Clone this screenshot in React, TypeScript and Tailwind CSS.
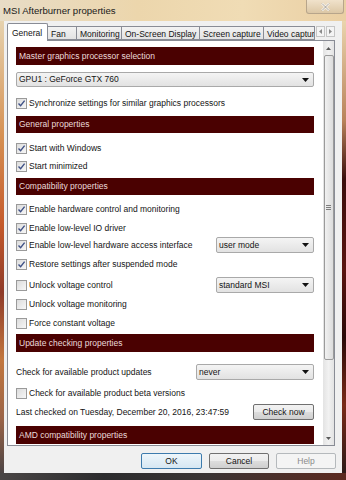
import React from "react";

const font = { fontFamily: '"Liberation Sans", Arial, sans-serif' };

function Header({ title, className = "" }: { title: string; className?: string }) {
    return (
        <div className={`h-[18px] shrink-0 bg-[#4a0101] flex items-center pl-[3px] text-[8.5px] text-[#eadada] ${className}`}>
            {title}
        </div>
    );
}

function CheckBox({ checked }: { checked: boolean }) {
    return (
        <div className="w-[11px] h-[11px] shrink-0 border border-[#9a9a9a] bg-[linear-gradient(135deg,#dcdcdc,#f7f7f7)] flex items-center justify-center">
            {checked && (
                <svg width="9" height="9" viewBox="0 0 9 9">
                    <path d="M1.5 4.6 L3.6 6.8 L7.6 1.6" fill="none" stroke="#3f5186" strokeWidth="1.4" />
                </svg>
            )}
        </div>
    );
}

function Check({ label, checked, className = "" }: { label: string; checked: boolean; className?: string }) {
    return (
        <div className={`h-[13px] shrink-0 flex items-center gap-[2px] text-[8.5px] text-[#141414] ${className}`}>
            <CheckBox checked={checked} />
            <span>{label}</span>
        </div>
    );
}

function Select({ value, className = "" }: { value: string; className?: string }) {
    return (
        <div className={`h-[16px] shrink-0 border border-[#a9a9a9] rounded-[2px] bg-[linear-gradient(to_bottom,#f4f4f4,#e2e2e2)] flex items-center justify-between pl-[2px] pr-[4px] text-[8.5px] text-[#141414] ${className}`}>
            <span>{value}</span>
            <svg width="7" height="4" viewBox="0 0 7 4">
                <path d="M0 0 H7 L3.5 4 Z" fill="#111" />
            </svg>
        </div>
    );
}

function Tab({ label, w, active }: { label: string; w: string; active?: boolean }) {
    if (active) {
        return (
            <div className={`${w} h-[18px] -mb-[1px] z-10 border border-b-0 border-[#898c95] bg-white pl-[4px] pt-[3px] text-[8.5px] text-[#141414] rounded-t-[2px]`}>
                {label}
            </div>
        );
    }
    return (
        <div className={`${w} h-[14px] border border-l-0 border-[#898c95] bg-[linear-gradient(to_bottom,#f3f3f3,#e3e3e3)] pl-[3px] pt-[1px] text-[8.5px] text-[#141414] overflow-hidden whitespace-nowrap`}>
            {label}
        </div>
    );
}

function Button({ label, w, primary, disabled }: { label: string; w: string; primary?: boolean; disabled?: boolean }) {
    const tone = disabled
        ? "border-[#b5b9bc] bg-[#f4f4f4] text-[#8a8a8a]"
        : primary
        ? "border-[#3d7bad] bg-[linear-gradient(to_bottom,#eef6fb,#d6e7f2)] text-[#141414]"
        : "border-[#707070] bg-[linear-gradient(to_bottom,#f2f2f2,#ebebeb_50%,#dddddd_51%,#cfcfcf)] text-[#141414]";
    return (
        <div className={`${w} h-[16px] border rounded-[2px] flex items-center justify-center text-[8.5px] ${tone}`}>
            {label}
        </div>
    );
}

function ScrollBar() {
    return (
        <div className="w-[11px] h-full bg-[linear-gradient(to_right,#e3e3e3,#f1f1f1,#e3e3e3)] flex flex-col items-center">
            <div className="h-[14px] w-full flex items-center justify-center">
                <svg width="5" height="3" viewBox="0 0 5 3"><path d="M0 3 L2.5 0 L5 3 Z" fill="#5a5a5a" /></svg>
            </div>
            <div className="h-[305px] w-[10px] border border-[#9b9b9b] rounded-[2px] bg-[linear-gradient(to_right,#f1f1f1,#dcdcdc)] flex items-center justify-center">
                <svg width="5" height="5" viewBox="0 0 5 5">
                    <path d="M0 0.5 H5 M0 2.5 H5 M0 4.5 H5" stroke="#7d7d7d" strokeWidth="1" />
                </svg>
            </div>
            <div className="flex-1" />
            <div className="h-[14px] w-full flex items-center justify-center">
                <svg width="5" height="3" viewBox="0 0 5 3"><path d="M0 0 L5 0 L2.5 3 Z" fill="#5a5a5a" /></svg>
            </div>
        </div>
    );
}

export default function App() {
    return (
        <div style={font} className="w-[346px] h-[480px] flex flex-col overflow-hidden bg-[#e3cfae]">
            {/* Title bar */}
            <div className="h-[21px] shrink-0 flex justify-between bg-[linear-gradient(to_right,#e8dcc6,#ecd6ac_40%,#f0dcb5_70%,#eacfa3)]">
                <span className="pl-[3px] pt-[4px] text-[9.6px] text-[#1a1a1a]">MSI Afterburner properties</span>
                <div className="w-[38px] h-[14px] mr-[2px] border border-t-0 border-[#b7a58b] rounded-b-[3px] bg-[linear-gradient(to_bottom,#f0e2cb,#dcc7a5)] flex items-center justify-center">
                    <svg width="9" height="8" viewBox="0 0 9 8">
                        <path d="M1 0.5 L8 7.5 M8 0.5 L1 7.5" stroke="#ffffff" strokeWidth="2" />
                        <path d="M1 0.5 L8 7.5 M8 0.5 L1 7.5" stroke="#8f8576" strokeWidth="0.8" />
                    </svg>
                </div>
            </div>

            <div className="flex-1 flex">
                <div className="w-[4px] bg-[linear-gradient(to_bottom,#e6d2ae,#d69255_25%,#c45a2c_45%,#8e3b2a_60%,#c2773f_75%,#9a6448_88%,#4c4444)]" />

                {/* Client area */}
                <div className="flex-1 bg-[#f0f0f0] flex flex-col">
                    {/* Tabs */}
                    <div className="h-[18px] mt-[1px] pl-[3px] flex items-end">
                        <Tab label="General" w="w-[41px]" active />
                        <Tab label="Fan" w="w-[29px]" />
                        <Tab label="Monitoring" w="w-[45px]" />
                        <Tab label="On-Screen Display" w="w-[78px]" />
                        <Tab label="Screen capture" w="w-[64px]" />
                        <Tab label="Video capture" w="w-[51px]" />
                        <div className="ml-[1px] mb-[3px] flex gap-[1px]">
                            <div className="w-[9px] h-[11px] border border-[#c5c5c5] bg-[#f4f4f4] flex items-center justify-center">
                                <svg width="3" height="5" viewBox="0 0 3 5"><path d="M3 0 L0 2.5 L3 5 Z" fill="#8a8a8a" /></svg>
                            </div>
                            <div className="w-[9px] h-[11px] border border-[#c5c5c5] bg-[#f4f4f4] flex items-center justify-center">
                                <svg width="3" height="5" viewBox="0 0 3 5"><path d="M0 0 L3 2.5 L0 5 Z" fill="#8a8a8a" /></svg>
                            </div>
                        </div>
                    </div>

                    {/* Tab panel */}
                    <div className="ml-[3px] w-[328px] h-[406px] border border-[#898c95] bg-white flex">
                        <div className="w-[306px] pl-[8px] flex flex-col overflow-hidden">
                            <Header title="Master graphics processor selection" className="mt-[6px]" />
                            <Select value="GPU1 : GeForce GTX 760" className="mt-[7px] !h-[15px]" />
                            <Check label="Synchronize settings for similar graphics processors" checked className="mt-[10px]" />
                            <Header title="General properties" className="mt-[6px] !h-[17px]" />
                            <Check label="Start with Windows" checked className="mt-[9px]" />
                            <Check label="Start minimized" checked className="mt-[5px]" />
                            <Header title="Compatibility properties" className="mt-[5px] !h-[17px]" />
                            <Check label="Enable hardware control and monitoring" checked className="mt-[8px]" />
                            <Check label="Enable low-level IO driver" checked className="mt-[6px]" />
                            <div className="mt-[2px] h-[16px] flex items-center justify-between">
                                <Check label="Enable low-level hardware access interface" checked />
                                <Select value="user mode" className="w-[98px]" />
                            </div>
                            <Check label="Restore settings after suspended mode" checked className="mt-[5px]" />
                            <div className="mt-[6px] h-[16px] flex items-center justify-between">
                                <Check label="Unlock voltage control" checked={false} />
                                <Select value="standard MSI" className="w-[98px]" />
                            </div>
                            <Check label="Unlock voltage monitoring" checked={false} className="mt-[5px]" />
                            <Check label="Force constant voltage" checked={false} className="mt-[6px]" />
                            <Header title="Update checking properties" className="mt-[4px]" />
                            <div className="mt-[12px] h-[16px] flex items-center justify-between">
                                <span className="text-[8.5px] text-[#141414]">Check for available product updates</span>
                                <Select value="never" className="w-[118px]" />
                            </div>
                            <Check label="Check for available product beta versions" checked={false} className="mt-[7px]" />
                            <div className="mt-[4px] h-[16px] flex items-center justify-between">
                                <span className="text-[8.5px] text-[#141414]">Last checked on Tuesday, December 20, 2016, 23:47:59</span>
                                <Button label="Check now" w="w-[61px]" />
                            </div>
                            <Header title="AMD compatibility properties" className="mt-[6px]" />
                        </div>
                        <div className="ml-[9px]">
                            <ScrollBar />
                        </div>
                    </div>

                    {/* Dialog buttons */}
                    <div className="mt-[7px] pr-[6px] flex justify-end gap-[7px]">
                        <Button label="OK" w="w-[61px]" primary />
                        <Button label="Cancel" w="w-[60px]" />
                        <Button label="Help" w="w-[60px]" disabled />
                    </div>
                </div>

                <div className="w-[4px] bg-[linear-gradient(to_bottom,#ead4ad,#b9825a_22%,#3a0e0c_35%,#5a1410_55%,#2a0a08_70%,#7a2a18_85%,#2c1a18)]" />
            </div>

            <div className="h-[7px] shrink-0 bg-[linear-gradient(to_right,#4a4646,#2c2c2e_30%,#3a3434_60%,#5c2a20)]" />
        </div>
    );
}
